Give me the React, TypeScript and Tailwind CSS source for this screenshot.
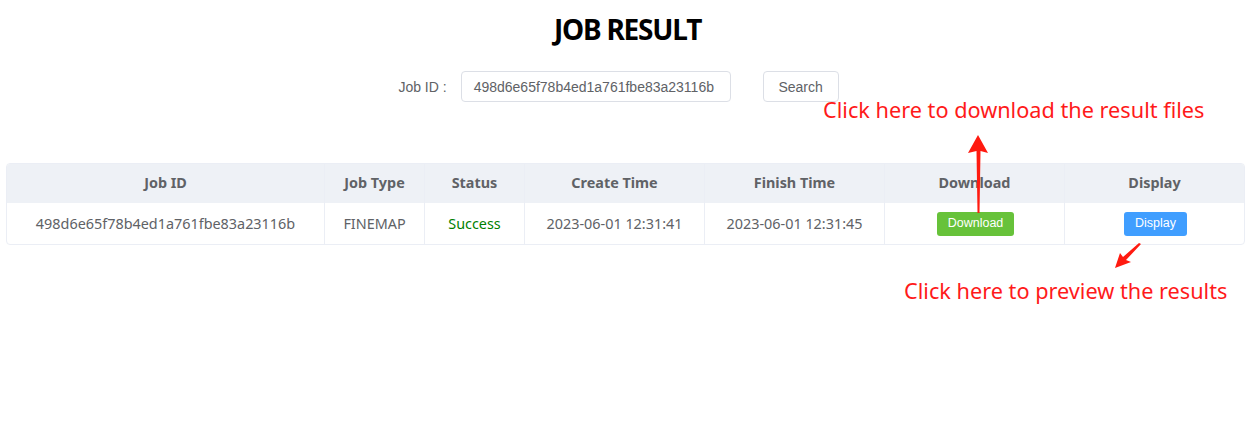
import React from 'react';

interface Job {
  id: string;
  type: string;
  status: string;
  createTime: string;
  finishTime: string;
}

const jobs: Job[] = [
  {
    id: '498d6e65f78b4ed1a761fbe83a23116b',
    type: 'FINEMAP',
    status: 'Success',
    createTime: '2023-06-01 12:31:41',
    finishTime: '2023-06-01 12:31:45',
  },
];

const columns = [
  { label: 'Job ID', width: 'w-[318px]' },
  { label: 'Job Type', width: 'w-[100px]' },
  { label: 'Status', width: 'w-[100px]' },
  { label: 'Create Time', width: 'w-[180px]' },
  { label: 'Finish Time', width: 'w-[180px]' },
  { label: 'Download', width: 'w-[180px]' },
  { label: 'Display', width: 'flex-1' },
];

const cell = 'flex items-center justify-center border-r border-[#ebeef5] last:border-r-0';

const App: React.FC = () => {
  return (
    <div className="relative h-[441px] w-full bg-white font-['Noto_Sans',sans-serif]">
      <h1 className="pt-[9px] text-center text-[28px] font-bold leading-[40px] tracking-[-1.2px] text-black">
        JOB RESULT
      </h1>

      <div className="mt-[22px] flex items-center justify-center pr-[18px] font-['Liberation_Sans',Arial,sans-serif] text-sm text-[#606266]">
        <span className="mr-[14px]">Job ID :</span>
        <div className="flex h-[31px] w-[270px] items-center rounded border border-[#dcdfe6] px-3">
          498d6e65f78b4ed1a761fbe83a23116b
        </div>
        <button className="ml-8 h-[31px] w-[76px] rounded border border-[#dcdfe6] bg-white">Search</button>
      </div>

      <div className="mx-[6px] mt-[61px] w-[1239px] overflow-hidden rounded border border-[#ebeef5] text-[14.4px]">
        <div className="flex h-[39px] bg-[#eef1f6] font-bold text-[#606266]">
          {columns.map((c) => (
            <div key={c.label} className={`${cell} ${c.width} pb-[2px]`}>
              {c.label}
            </div>
          ))}
        </div>
        {jobs.map((job) => (
          <div key={job.id} className="flex h-[41px] text-[#606266]">
            <div className={`${cell} w-[318px]`}>{job.id}</div>
            <div className={`${cell} w-[100px]`}>{job.type}</div>
            <div className={`${cell} w-[100px] text-[#008000]`}>{job.status}</div>
            <div className={`${cell} w-[180px]`}>{job.createTime}</div>
            <div className={`${cell} w-[180px]`}>{job.finishTime}</div>
            <div className={`${cell} w-[180px]`}>
              <button className="ml-[2px] h-6 w-[77px] rounded-[3px] bg-[#67c23a] font-['Liberation_Sans',Arial,sans-serif] text-[12.5px] text-white">
                Download
              </button>
            </div>
            <div className={`${cell} flex-1`}>
              <button className="ml-[2px] h-6 w-[63px] rounded-[3px] bg-[#409eff] font-['Liberation_Sans',Arial,sans-serif] text-[12.5px] text-white">
                Display
              </button>
            </div>
          </div>
        ))}
      </div>

      {/* annotations */}
      <div className="absolute left-[823px] top-[96px] whitespace-nowrap text-[21.7px] leading-[28px] text-[#ff1a1a]">
        Click here to download the result files
      </div>
      <div className="absolute left-[904px] top-[277px] whitespace-nowrap text-[21.7px] leading-[28px] text-[#ff1a1a]">
        Click here to preview the results
      </div>
      <svg className="pointer-events-none absolute left-0 top-0" width="1255" height="441">
        <polygon points="978,135 988,153 980.5,151 979.5,213 977.5,213 976.5,151 968,153" fill="#ff1a10" />
        <polygon points="1115,268 1120,253 1123,257 1139,243 1141,244 1126,260 1131,262" fill="#ff1a10" />
      </svg>
    </div>
  );
};

export default App;
